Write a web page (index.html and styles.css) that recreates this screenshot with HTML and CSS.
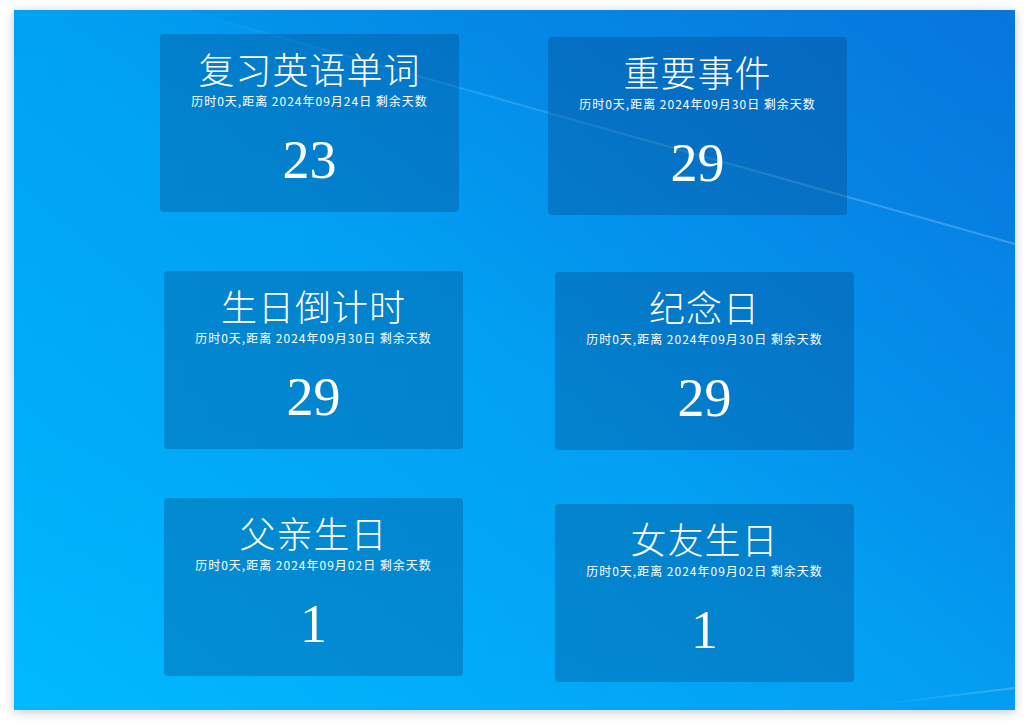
FILE: index.html
```html
<!DOCTYPE html>
<html lang="zh">
<head>
<meta charset="utf-8">
<title>倒数日</title>
<link rel="stylesheet" href="styles.css">
</head>
<body>
<div class="stage">
  <svg class="wallpaper" width="1001" height="700" viewBox="0 0 1001 700" aria-hidden="true">
    <defs>
      <linearGradient id="streak" x1="0" y1="0" x2="1" y2="0">
        <stop offset="0" stop-color="#ffffff" stop-opacity="0"/>
        <stop offset="0.3" stop-color="#ffffff" stop-opacity="0.12"/>
        <stop offset="1" stop-color="#ffffff" stop-opacity="0.2"/>
      </linearGradient>
      <linearGradient id="streak2" x1="0" y1="0" x2="1" y2="0">
        <stop offset="0" stop-color="#ffffff" stop-opacity="0"/>
        <stop offset="1" stop-color="#ffffff" stop-opacity="0.2"/>
      </linearGradient>
    </defs>
    <polygon points="176,0 1001,0 1001,232" fill="#0a4fb0" opacity="0.06"/>
    <line x1="176" y1="2" x2="1001" y2="234" stroke="url(#streak)" stroke-width="2"/>
    <line x1="850" y1="696" x2="1001" y2="678" stroke="url(#streak2)" stroke-width="2"/>
  </svg>

  <div class="card c1">
    <div class="title">复习英语单词</div>
    <div class="sub">历时0天,距离 2024年09月24日 剩余天数</div>
    <div class="num">23</div>
  </div>
  <div class="card c2">
    <div class="title">重要事件</div>
    <div class="sub">历时0天,距离 2024年09月30日 剩余天数</div>
    <div class="num">29</div>
  </div>
  <div class="card c3">
    <div class="title">生日倒计时</div>
    <div class="sub">历时0天,距离 2024年09月30日 剩余天数</div>
    <div class="num">29</div>
  </div>
  <div class="card c4">
    <div class="title">纪念日</div>
    <div class="sub">历时0天,距离 2024年09月30日 剩余天数</div>
    <div class="num">29</div>
  </div>
  <div class="card c5">
    <div class="title">父亲生日</div>
    <div class="sub">历时0天,距离 2024年09月02日 剩余天数</div>
    <div class="num">1</div>
  </div>
  <div class="card c6">
    <div class="title">女友生日</div>
    <div class="sub">历时0天,距离 2024年09月02日 剩余天数</div>
    <div class="num">1</div>
  </div>
</div>
</body>
</html>
```

FILE: styles.css
```css
html, body {
  margin: 0;
  padding: 0;
  background: #ffffff;
}

body {
  width: 1029px;
  height: 728px;
  overflow: hidden;
  font-family: "Noto Sans CJK SC", "DejaVu Sans", sans-serif;
}

.stage {
  position: relative;
  margin: 10px 0 0 14px;
  width: 1001px;
  height: 700px;
  overflow: hidden;
  box-shadow: 0 2px 10px rgba(0, 0, 0, 0.22);
  background-image:
    linear-gradient(to bottom left, rgba(12, 96, 214, 0.45) 0%, rgba(12, 96, 214, 0) 50%),
    linear-gradient(to right, rgba(12, 96, 214, 0) 0%, rgba(12, 96, 214, 0.32) 100%),
    linear-gradient(to bottom, #00a2f3 0%, #00aef9 60%, #00baff 100%);
}

.wallpaper {
  position: absolute;
  left: 0;
  top: 0;
}

.card {
  position: absolute;
  width: 299px;
  height: 178px;
  border-radius: 4px;
  background: rgba(8, 58, 120, 0.3);
  color: #ffffff;
  display: flex;
  flex-direction: column;
  align-items: center;
  box-sizing: border-box;
  padding-top: 14px;
}

.c1 { left: 146px; top: 24px; }
.c2 { left: 534px; top: 27px; }
.c3 { left: 150px; top: 261px; }
.c4 { left: 541px; top: 262px; }
.c5 { left: 150px; top: 488px; }
.c6 { left: 541px; top: 494px; }

.title {
  font-family: "Noto Sans CJK SC", sans-serif;
  font-weight: 300;
  font-size: 36px;
  line-height: 40px;
  letter-spacing: 1px;
}

.sub {
  margin-top: 5px;
  font-family: "Noto Sans CJK SC", sans-serif;
  font-size: 12px;
  line-height: 16px;
  letter-spacing: 1px;
  white-space: pre;
}

.num {
  margin-top: 21px;
  font-family: "Liberation Serif", "Times New Roman", serif;
  font-size: 54px;
  line-height: 60px;
}
```
